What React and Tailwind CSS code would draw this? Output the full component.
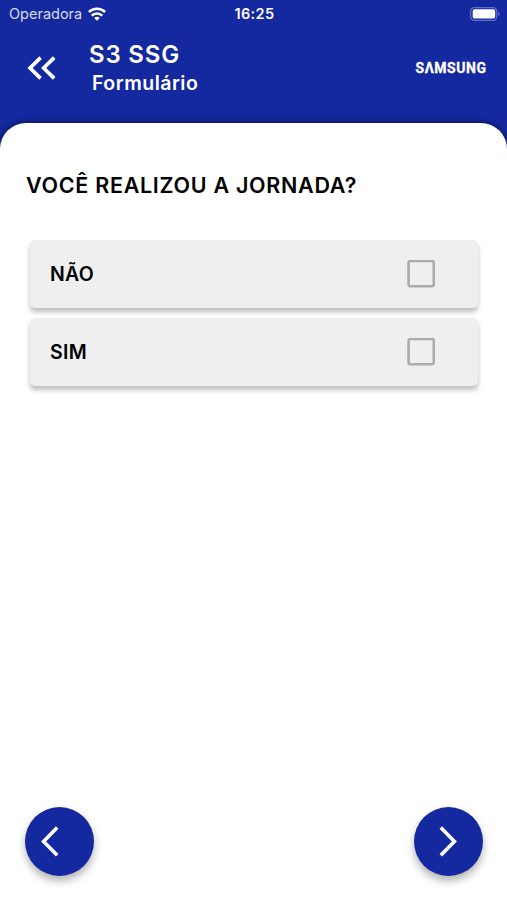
import { useState } from "react";

const options = ["NÃO", "SIM"];

const StatusBar = () => (
    <div className="grid grid-cols-3 items-center h-7 pl-[9px] pr-[7px] text-white">
        <div className="flex items-center gap-[6px]">
            <span className="text-[14.5px] text-[#d5daf5]">Operadora</span>
            <svg width="18" height="14" viewBox="0 0 18 14" fill="none" stroke="currentColor" strokeWidth="2.5">
                <path d="M0.9 5a11.6 11.6 0 0 1 16.2 0" />
                <path d="M3.7 8.6a7.5 7.5 0 0 1 10.6 0" />
                <path d="M9 13.7L6.2 11a4 4 0 0 1 5.6 0z" fill="currentColor" stroke="none" />
            </svg>
        </div>
        <span className="text-center text-[14.5px] font-semibold tracking-[0.4px]">16:25</span>
        <svg className="justify-self-end" width="30" height="14" viewBox="0 0 30 14">
            <rect x="0.7" y="0.7" width="26" height="12.6" rx="3.6" fill="none" stroke="#6470c5" strokeWidth="1.2" />
            <rect x="2.7" y="2.3" width="22.5" height="9.2" rx="1.8" fill="#fff" />
            <path d="M28.3 4.8a2.5 2.5 0 0 1 0 4.4z" fill="#6470c5" />
        </svg>
    </div>
);

const Header = () => (
    <header className="flex items-start h-[95px] pl-[27px] pr-[21px] text-white">
        <button className="mt-[27px] w-[29px]" aria-label="Voltar">
            <svg width="29" height="26" viewBox="0 0 29 26" fill="none" stroke="currentColor" strokeWidth="3.7">
                <path d="M13.6 2.6L3.1 13l10.5 10.4M27.2 2.6L16.7 13l10.5 10.4" />
            </svg>
        </button>
        <div className="ml-[33px] mt-[12px]">
            <h1 className="text-[24px] leading-[30px] font-semibold tracking-[0.8px]">S3 SSG</h1>
            <h2 className="pl-[3px] text-[19.5px] leading-[26px] font-semibold tracking-[0.5px]">Formulário</h2>
        </div>
        <svg className="ml-auto mt-[33px]" width="71" height="14" viewBox="0 0 71 14" aria-label="Samsung">
            <text
                x="0.5"
                y="12.2"
                textLength="70.5"
                fill="#fff"
                stroke="#fff"
                strokeWidth="0.3"
                className="font-['Roboto',sans-serif] text-[14px] font-bold"
            >
                SΛMSUNG
            </text>
        </svg>
    </header>
);

const Option = ({ label, checked, onChange }) => (
    <label className="flex items-center justify-between h-[68px] pl-5 pr-[43px] rounded-[5px] bg-[#efefef] shadow-[0_4px_5px_rgba(0,0,0,0.26)] cursor-pointer">
        <span className="text-[19.5px] font-semibold tracking-[0.3px] pt-px">{label}</span>
        <svg width="28" height="28" viewBox="0 0 28 28" fill="none">
            <rect x="1.6" y="1" width="25.2" height="25.2" rx="1.8" stroke="#acacac" strokeWidth="2.6" />
            {checked && <path d="M7 14l5 5 9-10" stroke="#1428a0" strokeWidth="3" />}
        </svg>
        <input type="checkbox" checked={checked} onChange={onChange} className="hidden" />
    </label>
);

const App = () => {
    const [selected, setSelected] = useState(null);

    return (
        <div className="flex flex-col h-screen overflow-hidden bg-[#1428a0] font-['Inter',sans-serif] text-black">
            <StatusBar />
            <Header />

            <main className="flex flex-col flex-1 pl-[25px] pr-6 pb-6 bg-white rounded-t-[26px] shadow-[0_0_6px_rgba(0,0,0,0.65)]">
                <h3 className="mt-[46px] pl-px text-[21.5px] leading-[32px] font-semibold tracking-[0.71px] whitespace-nowrap">
                    VOCÊ REALIZOU A JORNADA?
                </h3>

                {/* Answers */}
                <div className="flex flex-col gap-[10px] mt-[39px] pl-[5px] pr-[5px]">
                    {options.map((label) => (
                        <Option
                            key={label}
                            label={label}
                            checked={selected === label}
                            onChange={() => setSelected(label)}
                        />
                    ))}
                </div>

                {/* Navigation */}
                <div className="flex justify-between mt-auto text-white">
                    <button
                        aria-label="Anterior"
                        className="flex items-center pl-[15px] size-[69px] rounded-full bg-[#1428a0] shadow-[0_5px_8px_rgba(0,0,0,0.3)]"
                    >
                        <svg width="20" height="32" viewBox="0 0 20 32" fill="none" stroke="currentColor" strokeWidth="3.6">
                            <path d="M17.2 1.6L3.6 15.4l13.6 13.8" />
                        </svg>
                    </button>
                    <button
                        aria-label="Próxima"
                        className="flex items-center pl-[24px] size-[69px] rounded-full bg-[#1428a0] shadow-[0_5px_8px_rgba(0,0,0,0.3)]"
                    >
                        <svg width="20" height="32" viewBox="0 0 20 32" fill="none" stroke="currentColor" strokeWidth="3.6">
                            <path d="M2.8 1.6l13.6 13.8L2.8 29.2" />
                        </svg>
                    </button>
                </div>
            </main>
        </div>
    );
};

export default App;
